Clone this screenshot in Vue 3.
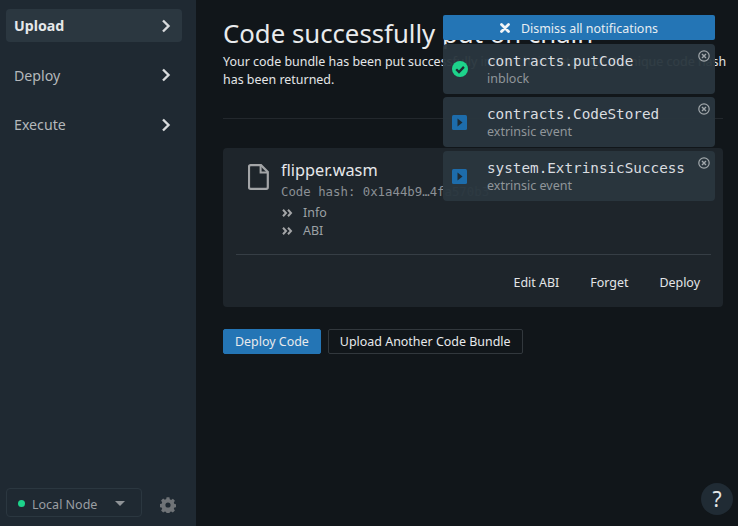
<script setup>
const nav = [
  { label: 'Upload', active: true },
  { label: 'Deploy', active: false },
  { label: 'Execute', active: false }
]
const notes = [
  { title: 'contracts.putCode', sub: 'inblock', kind: 'ok' },
  { title: 'contracts.CodeStored', sub: 'extrinsic event', kind: 'event' },
  { title: 'system.ExtrinsicSuccess', sub: 'extrinsic event', kind: 'event' }
]
</script>

<template>
  <div class="app">
    <aside class="sidebar">
      <nav class="nav">
        <a v-for="n in nav" :key="n.label" class="nav-item" :class="{ active: n.active }">
          <span>{{ n.label }}</span>
          <svg width="12" height="16" viewBox="0 0 12 16"><path d="M3 2.5 L8.5 8 L3 13.5" fill="none" stroke="currentColor" stroke-width="2.4"/></svg>
        </a>
      </nav>
      <div class="side-foot">
        <div class="node">
          <i class="dot"></i>
          <span class="node-name">Local Node</span>
          <i class="caret"></i>
        </div>
        <svg class="gear" width="16" height="16" viewBox="0 0 16 16">
          <path fill-rule="evenodd" fill="#6f7377" d="M6.6.3h2.8l.4 2 1.3.6 1.8-1.1 2 2-1.1 1.8.6 1.3 2 .4v2.8l-2 .4-.6 1.3 1.1 1.8-2 2-1.8-1.1-1.3.6-.4 2H6.6l-.4-2-1.3-.6-1.8 1.1-2-2 1.1-1.8-.6-1.3-2-.4V7.1l2-.4.6-1.3L1.1 3.6l2-2 1.8 1.1 1.3-.6zM8 5.4a2.6 2.6 0 1 0 0 5.2 2.6 2.6 0 0 0 0-5.2z"/>
        </svg>
      </div>
    </aside>

    <main class="main">
      <header class="head">
        <h1>Code successfully put on chain</h1>
        <p>Your code bundle has been put successfully in the chain's storage. A unique code hash has been returned.</p>
      </header>

      <section class="card">
        <div class="card-top">
          <svg class="file" width="21" height="26" viewBox="0 0 21 26">
            <path d="M2.5 1.2h10.5l6.8 6.8v15.3a1.5 1.5 0 0 1-1.5 1.5h-15.8a1.5 1.5 0 0 1-1.5-1.5V2.7a1.5 1.5 0 0 1 1.5-1.5z" fill="none" stroke="#a3a5a7" stroke-width="2.2"/>
            <path d="M12.6 1.5v7h7" fill="none" stroke="#a3a5a7" stroke-width="2"/>
          </svg>
          <div class="meta">
            <div class="name">flipper.wasm</div>
            <div class="hash">Code hash: 0x1a44b9…4fa570b3</div>
            <div class="toggle">
              <svg class="chev" width="11" height="8" viewBox="0 0 11 8"><path d="M1 .8 L4 4 L1 7.2 M6 .8 L9 4 L6 7.2" fill="none" stroke="#a3a5a7" stroke-width="2"/></svg>
              Info
            </div>
            <div class="toggle">
              <svg class="chev" width="11" height="8" viewBox="0 0 11 8"><path d="M1 .8 L4 4 L1 7.2 M6 .8 L9 4 L6 7.2" fill="none" stroke="#a3a5a7" stroke-width="2"/></svg>
              ABI
            </div>
          </div>
        </div>
        <footer class="card-foot">
          <a>Edit ABI</a>
          <a>Forget</a>
          <a>Deploy</a>
        </footer>
      </section>

      <div class="actions">
        <button class="btn primary">Deploy Code</button>
        <button class="btn outline">Upload Another Code Bundle</button>
      </div>
    </main>

    <div class="notes">
      <button class="dismiss">
        <svg width="10" height="10" viewBox="0 0 10 10"><path d="M1.5 1.5 L8.5 8.5 M8.5 1.5 L1.5 8.5" stroke="#f2f5f7" stroke-width="2.8" stroke-linecap="round"/></svg>
        <span>Dismiss all notifications</span>
      </button>
      <div v-for="n in notes" :key="n.title" class="note">
        <div class="note-icon">
          <svg v-if="n.kind === 'ok'" width="16" height="16" viewBox="0 0 16 16">
            <circle cx="8" cy="8" r="8" fill="#1dd38b"/>
            <path d="M4.2 8.2 L7 11 L11.9 5.9" fill="none" stroke="#1f2b33" stroke-width="2.3"/>
          </svg>
          <svg v-else class="event-icon" width="15" height="15" viewBox="0 0 15 15">
            <rect width="15" height="15" rx="1.5" fill="#1d6cab"/>
            <path d="M5.5 3.5 L10.5 7.5 L5.5 11.5Z" fill="#1f2b33"/>
          </svg>
        </div>
        <div class="note-body">
          <div class="note-title">{{ n.title }}</div>
          <div class="note-sub">{{ n.sub }}</div>
        </div>
        <svg class="note-close" width="12" height="12" viewBox="0 0 12 12">
          <circle cx="6" cy="6" r="5.2" fill="none" stroke="#a2a8ac" stroke-width="1.2"/>
          <path d="M4 4 L8 8 M8 4 L4 8" stroke="#a2a8ac" stroke-width="1.4"/>
        </svg>
      </div>
    </div>

    <button class="help">?</button>
  </div>
</template>

<style>
html, body { margin: 0; background: #11161a; }
</style>

<style scoped>
.app {
  display: flex;
  width: 738px;
  height: 526px;
  overflow: hidden;
  position: relative;
  background: #11161a;
  color: #e8eaec;
  font-family: "Noto Sans", sans-serif;
  font-size: 12.44px;
}
.sidebar {
  width: 196px;
  flex: none;
  background: #1f2932;
  display: flex;
  flex-direction: column;
  justify-content: space-between;
  box-sizing: border-box;
  padding: 9px 14px 9px 6px;
}
.nav { display: flex; flex-direction: column; gap: 16.5px; }
.nav-item {
  height: 33px;
  display: flex;
  align-items: center;
  justify-content: space-between;
  padding: 0 10px 0 8px;
  border-radius: 4px;
  font-size: 14.2px;
  color: #b4b8bb;
}
.nav-item.active {
  background: #2b3740;
  color: #e6e8ea;
  font-weight: 700;
}
.nav-item svg { color: #d8dadc; }
.side-foot { display: flex; align-items: center; padding-right: 0; }
.node {
  width: 136px;
  height: 29px;
  box-sizing: border-box;
  border: 1px solid #2b3740;
  border-radius: 4px;
  display: flex;
  align-items: center;
  padding: 3px 0 0 11px;
  color: #9a9ea2;
  font-size: 12.5px;
}
.caret {
  margin-left: 18px;
  margin-top: -1px;
  width: 0;
  height: 0;
  border-left: 5px solid transparent;
  border-right: 5px solid transparent;
  border-top: 5px solid #8f9397;
}
.dot { width: 7px; height: 7px; border-radius: 50%; background: #1dd38b; margin-right: 7px; margin-top: -2px; }
.gear { margin-left: 18px; margin-top: 5px; }

.main {
  flex: 1;
  box-sizing: border-box;
  padding: 15px 15px 0 27px;
  min-width: 0;
}
.head { padding-bottom: 29px; border-bottom: 1px solid #23282d; }
h1 {
  margin: 0;
  font-size: 25.75px;
  font-weight: 400;
  line-height: 36px;
  color: #e9ebed;
}
.head p {
  margin: 2px -6px 0 0;
  line-height: 18px;
  color: #e4e6e8;
}
.card {
  margin-top: 29px;
  background: #1e252b;
  border-radius: 4px;
  padding: 10px 12px 0 13px;
  height: 159px;
  box-sizing: border-box;
}
.card-top { display: flex; padding-left: 12px; height: 96px; border-bottom: 1px solid #363e45; }
.file { margin-top: 6px; margin-right: 12px; }
.name { font-size: 16.3px; line-height: 24px; color: #e6e8ea; }
.hash {
  font-family: "DejaVu Sans Mono", monospace;
  font-size: 12.35px;
  line-height: 18px;
  color: #8b9095;
  margin-top: 1px;
  margin-bottom: 3px;
}
.toggle { line-height: 18px; color: #9ca1a5; display: flex; align-items: center; }
.chev { margin: 0 10px 0 1px; flex: none; }
.card-foot {
  display: flex;
  justify-content: flex-end;
  gap: 31px;
  padding: 19px 11px 0 0;
  color: #e4e6e8;
  line-height: 18px;
}
.actions { display: flex; gap: 7px; margin-top: 22px; }
.btn {
  height: 25px;
  box-sizing: border-box;
  font: inherit;
  border-radius: 2px;
  color: #e8eaec;
  padding: 0 11px;
  line-height: 18px;
}
.primary { background: #2475b5; border: 1px solid #2475b5; }
.outline { background: transparent; border: 1px solid #32383d; }

.notes {
  position: absolute;
  left: 443px;
  top: 15px;
  width: 272px;
  display: flex;
  flex-direction: column;
  gap: 3.5px;
}
.dismiss {
  height: 25px;
  background: #2475b5;
  border: 0;
  border-radius: 2px;
  color: #e8eef2;
  font: inherit;
  display: flex;
  align-items: center;
  justify-content: center;
  gap: 11px;
  padding: 1px 0 0;
}
.note {
  position: relative;
  display: flex;
  align-items: center;
  height: 50px;
  flex: none;
  background: rgba(42, 54, 62, 0.96);
  border-radius: 4px;
  box-sizing: border-box;
}
.note-icon { width: 44px; padding-left: 9px; box-sizing: border-box; display: flex; }
.event-icon { margin-top: 1px; }
.note-body { display: flex; flex-direction: column; }
.note-title {
  font-family: "DejaVu Sans Mono", monospace;
  font-size: 14.3px;
  line-height: 20px;
  color: #dadde0;
}
.note-sub { font-size: 12.5px; line-height: 16px; color: #90969a; }
.note-close { position: absolute; right: 5px; top: 6px; }

.help {
  position: absolute;
  right: 5px;
  bottom: 11px;
  width: 32px;
  height: 32px;
  border: 0;
  border-radius: 50%;
  background: #202b34;
  color: #e4e6e8;
  font: inherit;
  font-size: 21px;
  line-height: 32px;
  padding: 0;
}
</style>
